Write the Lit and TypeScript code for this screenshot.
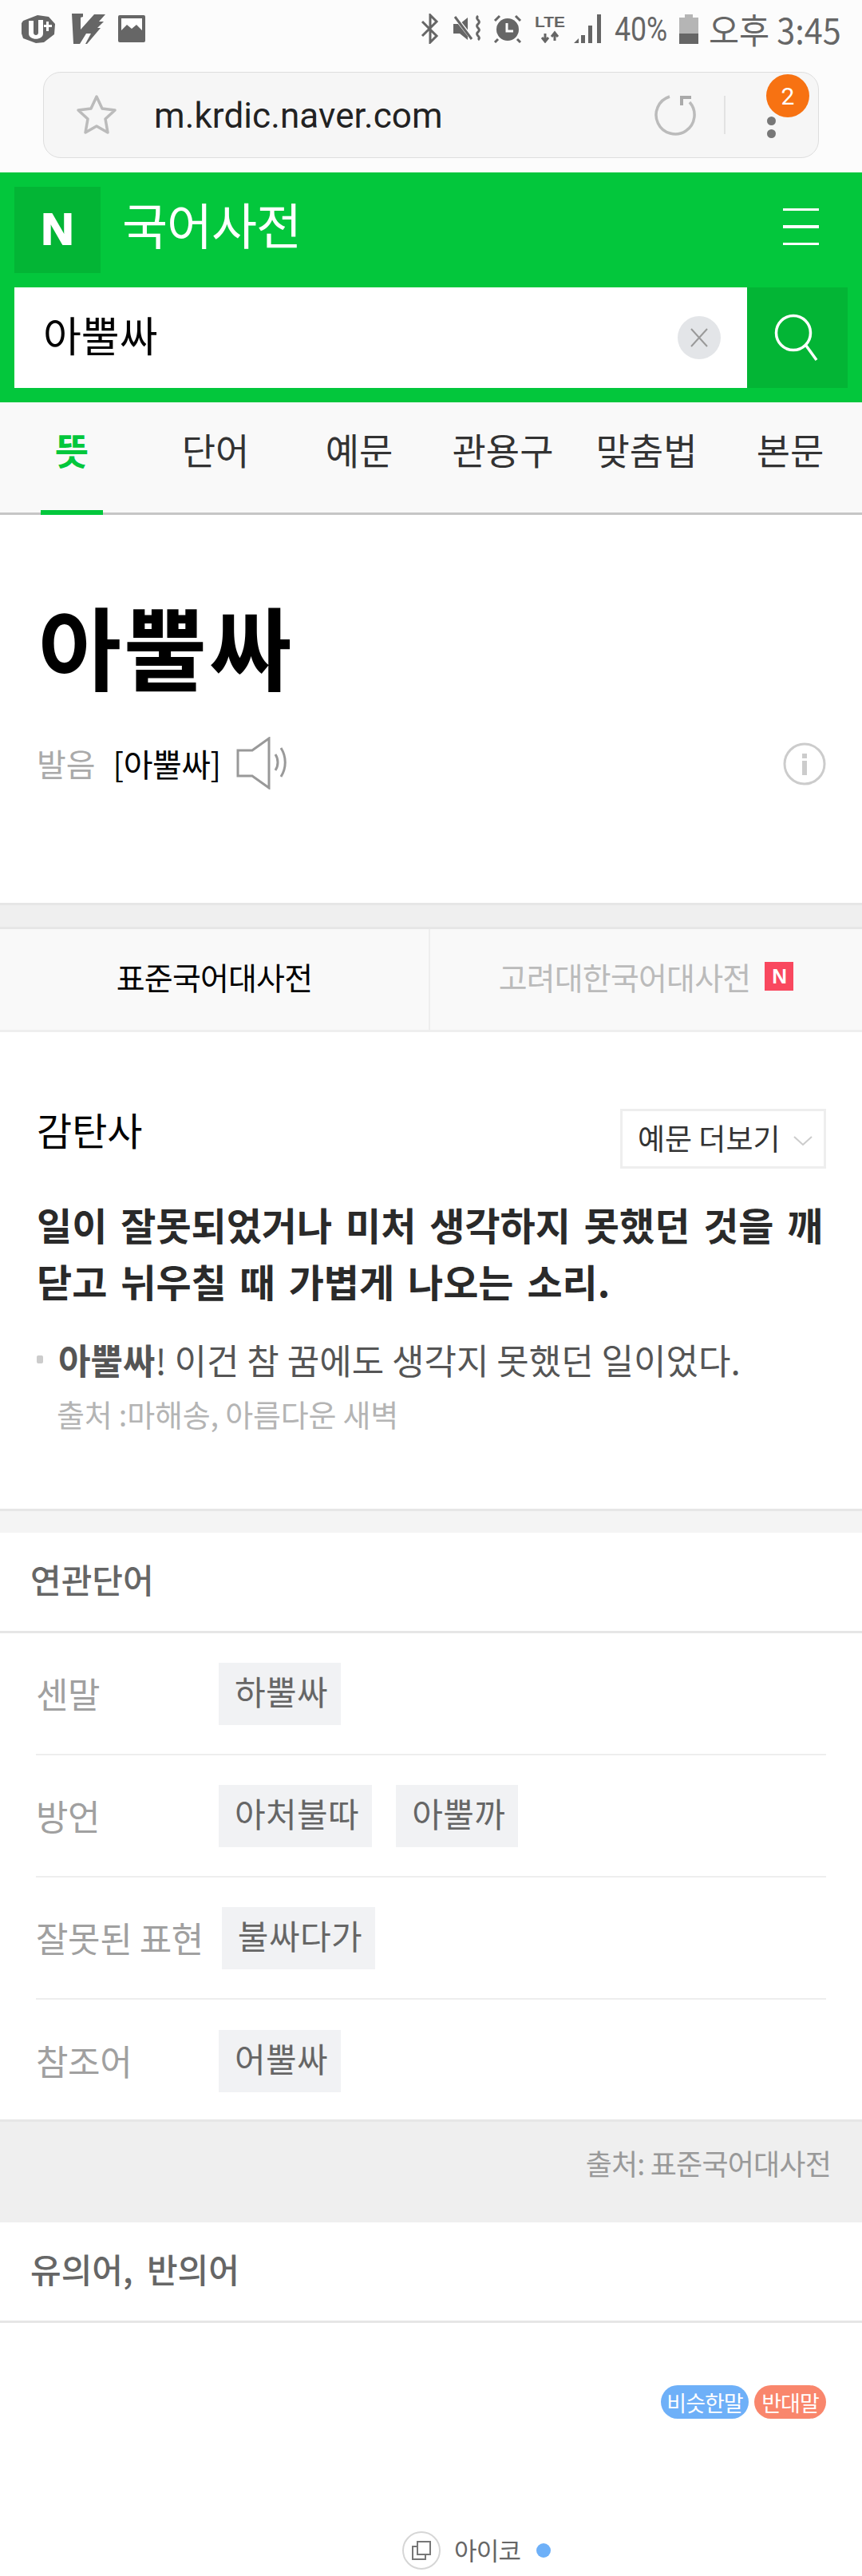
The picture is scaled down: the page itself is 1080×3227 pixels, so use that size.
import { LitElement, html, css } from "lit";
import { customElement } from "lit/decorators.js";

const related = [
  { label: "센말", words: ["하뿔싸"] },
  { label: "방언", words: ["아처불따", "아뿔까"] },
  { label: "잘못된 표현", words: ["불싸다가"] },
  { label: "참조어", words: ["어뿔싸"] },
];

@customElement("app-root")
export class AppRoot extends LitElement {
  static styles = css`
    :host { display: block; width: 1080px; height: 3227px; overflow: hidden; background: #fff; font-family: "Noto Sans CJK KR", "Noto Sans", sans-serif; color: #000; }
    * { box-sizing: border-box; }
    .status { height: 72px; background: #fcfcfc; display: flex; align-items: center; justify-content: space-between; padding: 0 26px 0 27px; color: #666; }
    .status-l, .status-r { display: flex; align-items: center; }
    .status-l svg + svg { margin-left: 20px; }
    .status-l svg:last-child { margin-left: 16px; }
    .m18 { margin-left: 18px; }
    .m13 { margin-left: 13px; }
    .m16 { margin-left: 16px; }
    .m10 { margin-left: 10px; }
    .m11 { margin-left: 11px; }
    .batt-text { width: 70px; white-space: nowrap; font: 43px "Roboto", sans-serif; color: #666; transform: scaleX(.83); transform-origin: left center; }
    .clock { width: 166px; white-space: nowrap; font: 44px "Noto Sans CJK KR", sans-serif; line-height: 1; color: #666; transform: scaleX(.94); transform-origin: left center; }
    .browser { height: 144px; background: #fcfcfc; padding: 18px 54px 0; }
    .url { position: relative; height: 108px; border: 1px solid #dedede; border-radius: 22px; background: #f6f6f6; display: flex; align-items: center; padding: 0 0 0 40px; }
    .url-text { font: 44px "Roboto", sans-serif; color: #222; margin: 2px 0 0 46px; flex: 1; letter-spacing: .1px; }
    .reload { margin-right: 34px; }
    .sep { width: 2px; height: 48px; background: #e2e2e2; margin-right: 52px; }
    .dots { display: flex; flex-direction: column; gap: 5px; margin: 30px 53px 0 0; }
    .dots i { display: block; width: 11px; height: 11px; border-radius: 50%; background: #777; }
    .badge { position: absolute; right: 11px; top: 2px; width: 54px; height: 54px; border-radius: 50%; background: #f77212; color: #fff; font: 30px "Roboto", sans-serif; display: flex; align-items: center; justify-content: center; }
    .green { height: 288px; background: #03c73c; padding: 18px 18px 0; }
    .brand { display: flex; align-items: center; height: 108px; }
    .n { width: 108px; height: 108px; background: #03b535; display: flex; align-items: center; justify-content: center; padding-bottom: 4px; font: 900 56px "Liberation Sans", sans-serif; color: #fff; -webkit-text-stroke: 2px #fff; }
    .title { font-size: 62px; line-height: 1; color: #fff; margin: 0 0 16px 27px; flex: 1; letter-spacing: -1px; }
    .burger { width: 45px; display: flex; flex-direction: column; gap: 18px; margin: 0 36px 8px 0; }
    .burger i { display: block; height: 3.5px; background: #fff; }
    .search { display: flex; height: 126px; margin-top: 18px; }
    .input { flex: 1; background: #fff; display: flex; align-items: center; padding: 0 33px 0 36px; }
    .input span { flex: 1; font-size: 52px; line-height: 1; margin-top: -8px; }
    .clear { width: 54px; height: 54px; border-radius: 50%; background: #e3e5e8; display: flex; align-items: center; justify-content: center; }
    .go { width: 126px; background: #03b535; display: flex; align-items: center; justify-content: center; }
    .tabs { position: relative; height: 141px; background: #f9f9f9; border-bottom: 3px solid #c6c6c6; display: flex; }
    .tab { width: 180px; text-align: center; font-size: 46px; line-height: 1; padding-top: 35px; color: #333; white-space: nowrap; }
    .tab.on { color: #03c73c; font-weight: 700; }
    .mark { position: absolute; left: 51px; top: 135px; width: 78px; height: 6px; background: #03c73c; }
    .head { height: 486px; padding: 100px 46px 0; position: relative; }
    h1 { margin: 0 0 0 2px; font-size: 113px; line-height: 1.1; font-weight: 700; letter-spacing: 3px; }
    .pron { display: flex; align-items: center; margin-top: 56px; height: 62px; }
    .pron .k { font-size: 40px; color: #aaa; }
    .pron .v { font-size: 40px; margin-left: 22px; letter-spacing: -.5px; }
    .pron svg { margin-left: 18px; }
    .info { position: absolute; right: 45px; top: 285px; }
    .gap { height: 33px; background: #efefef; border-top: 3px solid #e6e6e6; border-bottom: 3px solid #e6e6e6; }
    .dict { height: 129px; display: flex; background: #f9f9f9; border-bottom: 3px solid #eee; font-size: 39px; letter-spacing: -.8px; }
    .dict > div { display: flex; align-items: center; justify-content: center; padding-bottom: 8px; }
    .dict .a { width: 539px; border-right: 2px solid #eee; }
    .dict .b { flex: 1; color: #bbb; }
    .newb { width: 36px; height: 36px; background: #f9485f; color: #fff; font: 700 26px "Liberation Sans", sans-serif; display: flex; align-items: center; justify-content: center; margin-left: 18px; }
    .def { height: 600px; padding: 97px 46px 0; border-bottom: 3px solid #e6e6e6; position: relative; }
    .pos { font-size: 48px; line-height: 1; }
    .more { position: absolute; right: 45px; top: 96px; width: 258px; height: 75px; border: 3px solid #eee; display: flex; align-items: center; padding: 0 0 4px 19px; font-size: 37px; color: #333; gap: 16px; white-space: nowrap; }
    .more svg { margin-top: 8px; }
    .mean { margin: 60px 0 0; font-size: 48px; line-height: 71px; font-weight: 700; word-spacing: 6px; color: #2a2a2a; }
    .ex { margin-top: 38px; font-size: 44px; line-height: 50px; color: #555; position: relative; padding-left: 27px; }
    .ex::before { content: ""; position: absolute; left: 0; top: 20px; width: 8px; height: 10px; background: #ccc; border-radius: 2px; }
    .src { font-size: 38px; color: #b4b4b4; margin: 19px 0 0 25px; line-height: 48px; letter-spacing: -.2px; }
    .band { height: 27px; background: #f4f4f4; }
    .sec { height: 126px; display: flex; align-items: center; padding: 0 38px 8px; border-bottom: 3px solid #e6e6e6; font-size: 42px; font-weight: 500; color: #666; word-spacing: 8px; }
    .rows { padding: 0 45px; height: 609px; }
    .row { height: 153px; border-bottom: 2px solid #eee; display: flex; align-items: center; }
    .row:last-child { border-bottom: 0; }
    .row .lab { font-size: 44px; color: #a0a0a0; min-width: 229px; padding-right: 23px; white-space: nowrap; letter-spacing: -.4px; margin-bottom: 2px; }
    .chips { display: flex; gap: 30px; }
    .chip { height: 78px; padding: 0 16px 8px 20px; background: #f1f2f4; font-size: 42px; color: #666; display: flex; align-items: center; letter-spacing: .4px; }
    .foot { height: 129px; background: #efefef; border-top: 3px solid #e6e6e6; text-align: right; padding: 26px 39px 0 0; font-size: 36px; color: #999; letter-spacing: -.8px; line-height: 1.4; }
    .syn { position: relative; height: 317px; }
    .pills { position: absolute; right: 45px; top: 78px; display: flex; gap: 7px; }
    .pill { height: 42px; border-radius: 21px; color: #fff; font-size: 27px; display: flex; align-items: center; justify-content: center; letter-spacing: -1px; }
    .pill.s { width: 110px; background: #6eb0f8; }
    .pill.o { width: 90px; background: #f9866c; }
    .node { position: absolute; left: 504px; top: 261px; display: flex; align-items: center; }
    .node .c { width: 48px; height: 48px; border: 2px solid #d6d6d6; border-radius: 50%; display: flex; align-items: center; justify-content: center; }
    .node .w { font-size: 31px; color: #666; margin: -4px 0 0 17px; letter-spacing: -.8px; }
    .node .d { width: 18px; height: 18px; border-radius: 50%; background: #6eb0f8; margin-left: 20px; }
  `;

  render() {
    return html`
      <div class="status">
        <div class="status-l">
          <svg width="43" height="36" viewBox="0 0 43 36"><path d="M2 8 20 1l14 2 8 9-1 13-13 10-10 1L2 30 0 24V11z" fill="#666"/><path d="M9 8h6v15c0 4 6 4 6 0V7h6v17c0 9-18 9-18 0z" fill="#fff"/><path d="M31 9h3v4h4v3h-4v5h-3v-5h-3v-3h3z" fill="#fff"/></svg>
          <svg width="42" height="38" viewBox="0 0 42 38"><path d="M0 0h14v4l-3 1v15L28 1l14 0-8 9h6l-8 8h4L19 38h-2l7-13h-6l-8 13H2z" fill="#666"/></svg>
          <svg width="34" height="34" viewBox="0 0 34 34"><rect width="34" height="34" rx="2" fill="#666"/><path d="M4 19 11 12l6 5 6-5 7 7V4H4z" fill="#fff"/></svg>
        </div>
        <div class="status-r">
          <svg width="23" height="38" viewBox="0 0 23 38"><path d="M2 10l18 18-8 8V2l8 8L2 28" fill="none" stroke="#666" stroke-width="3"/></svg>
          <svg class="m18" width="37" height="36" viewBox="0 0 37 36"><path d="M0 12h8l10-8v28l-10-8H0z" fill="#666"/><path d="M2 3l22 28" stroke="#fcfcfc" stroke-width="5"/><path d="M2 3l21 28" stroke="#666" stroke-width="3"/><path d="M31 2c-5 4 5 6 0 10s5 6 0 10 5 6 0 10" fill="none" stroke="#666" stroke-width="3"/></svg>
          <svg class="m13" width="36" height="36" viewBox="0 0 36 36"><circle cx="18" cy="19" r="14" fill="#666"/><path d="M17 11v10h8" fill="none" stroke="#fff" stroke-width="3"/><path d="M2 8l6-6M34 8l-6-6M6 31l-4 4M30 31l4 4" stroke="#666" stroke-width="3"/></svg>
          <svg class="m16" width="38" height="36" viewBox="0 0 38 36"><text x="0" y="16" font-family="Liberation Sans" font-size="19" font-weight="700" fill="#666" textLength="38" lengthAdjust="spacingAndGlyphs">LTE</text><path d="M13 24v9M9 29l4 5 4-5M25 33v-9M21 28l4-5 4 5" fill="none" stroke="#666" stroke-width="3"/></svg>
          <svg class="m10" width="36" height="36" viewBox="0 0 36 36"><path d="M1 36l6-6v6zM10 26h5v10h-5zM19 14h5v22h-5zM30 0h5v36h-5z" fill="#666"/></svg>
          <span class="batt-text m16">40%</span>
          <svg class="m11" width="24" height="37" viewBox="0 0 24 37"><path d="M7 0h10v4h7v33H0V4h7z" fill="#b5b5b5"/><rect y="24" width="24" height="13" fill="#666"/></svg>
          <span class="clock m13">오후 3:45</span>
        </div>
      </div>
      <div class="browser">
        <div class="url">
          <svg width="52" height="52" viewBox="0 0 52 52"><path d="M26 3l7 15 16 2-12 11 3 17-14-8-14 8 3-17L3 20l16-2z" fill="none" stroke="#bbb" stroke-width="3.5" stroke-linejoin="round"/></svg>
          <span class="url-text">m.krdic.naver.com</span>
          <svg class="reload" width="54" height="54" viewBox="0 0 54 54"><path d="M45 11A24 24 0 1 1 20 4" fill="none" stroke="#bbb" stroke-width="3.5"/><path d="M35 15V5h12" fill="none" stroke="#aaa" stroke-width="4"/></svg>
          <span class="sep"></span>
          <span class="dots"><i></i><i></i></span>
          <span class="badge">2</span>
        </div>
      </div>
      <div class="green">
        <div class="brand">
          <div class="n">N</div>
          <div class="title">국어사전</div>
          <div class="burger"><i></i><i></i><i></i></div>
        </div>
        <div class="search">
          <div class="input">
            <span>아뿔싸</span>
            <div class="clear"><svg width="24" height="24" viewBox="0 0 24 24"><path d="M2 1l20 22M22 1 2 23" stroke="#999" stroke-width="2"/></svg></div>
          </div>
          <div class="go"><svg width="58" height="60" viewBox="0 0 58 60"><circle cx="24" cy="24" r="21.5" fill="none" stroke="#fff" stroke-width="3.5"/><path d="M40 40l13 18" stroke="#fff" stroke-width="3.5"/></svg></div>
        </div>
      </div>
      <div class="tabs">
        ${["뜻", "단어", "예문", "관용구", "맞춤법", "본문"].map((t, i) => html`<div class="tab ${i === 0 ? "on" : ""}">${t}</div>`)}
        <div class="mark"></div>
      </div>
      <div class="head">
        <h1>아뿔싸</h1>
        <div class="pron">
          <span class="k">발음</span>
          <span class="v">[아뿔싸]</span>
          <svg width="70" height="66" viewBox="0 0 70 66"><path d="M3 17h18L42 2v62L21 49H3z" fill="none" stroke="#999" stroke-width="3"/><path d="M50 22c4 6 4 14 0 20M57 14c7 11 7 25 0 36" fill="none" stroke="#999" stroke-width="3"/></svg>
        </div>
        <svg class="info" width="54" height="54" viewBox="0 0 54 54"><circle cx="27" cy="27" r="25" fill="none" stroke="#ccc" stroke-width="3"/><rect x="24" y="14" width="6" height="6" fill="#ccc"/><rect x="24" y="23" width="6" height="18" fill="#ccc"/></svg>
      </div>
      <div class="gap"></div>
      <div class="dict">
        <div class="a">표준국어대사전</div>
        <div class="b">고려대한국어대사전<span class="newb">N</span></div>
      </div>
      <div class="def">
        <div class="pos">감탄사</div>
        <div class="more">예문 더보기<svg width="24" height="12" viewBox="0 0 24 12"><path d="M1 1l11 10L23 1" fill="none" stroke="#ccc" stroke-width="2"/></svg></div>
        <p class="mean">일이 잘못되었거나 미처 생각하지 못했던 것을 깨닫고 뉘우칠 때 가볍게 나오는 소리.</p>
        <div class="ex"><b>아뿔싸</b>! 이건 참 꿈에도 생각지 못했던 일이었다.</div>
        <div class="src">출처 :마해송, 아름다운 새벽</div>
      </div>
      <div class="band"></div>
      <div class="sec">연관단어</div>
      <div class="rows">
        ${related.map((r) => html`<div class="row"><span class="lab">${r.label}</span><div class="chips">${r.words.map((w) => html`<span class="chip">${w}</span>`)}</div></div>`)}
      </div>
      <div class="foot">출처: 표준국어대사전</div>
      <div class="sec">유의어, 반의어</div>
      <div class="syn">
        <div class="pills"><span class="pill s">비슷한말</span><span class="pill o">반대말</span></div>
        <div class="node">
          <span class="c"><svg width="28" height="28" viewBox="0 0 28 28"><path d="M9 3h16v16H9z" fill="none" stroke="#777" stroke-width="2"/><path d="M9 9H3v16h16v-6" fill="none" stroke="#777" stroke-width="2"/></svg></span>
          <span class="w">아이코</span><span class="d"></span>
        </div>
      </div>
    `;
  }
}
